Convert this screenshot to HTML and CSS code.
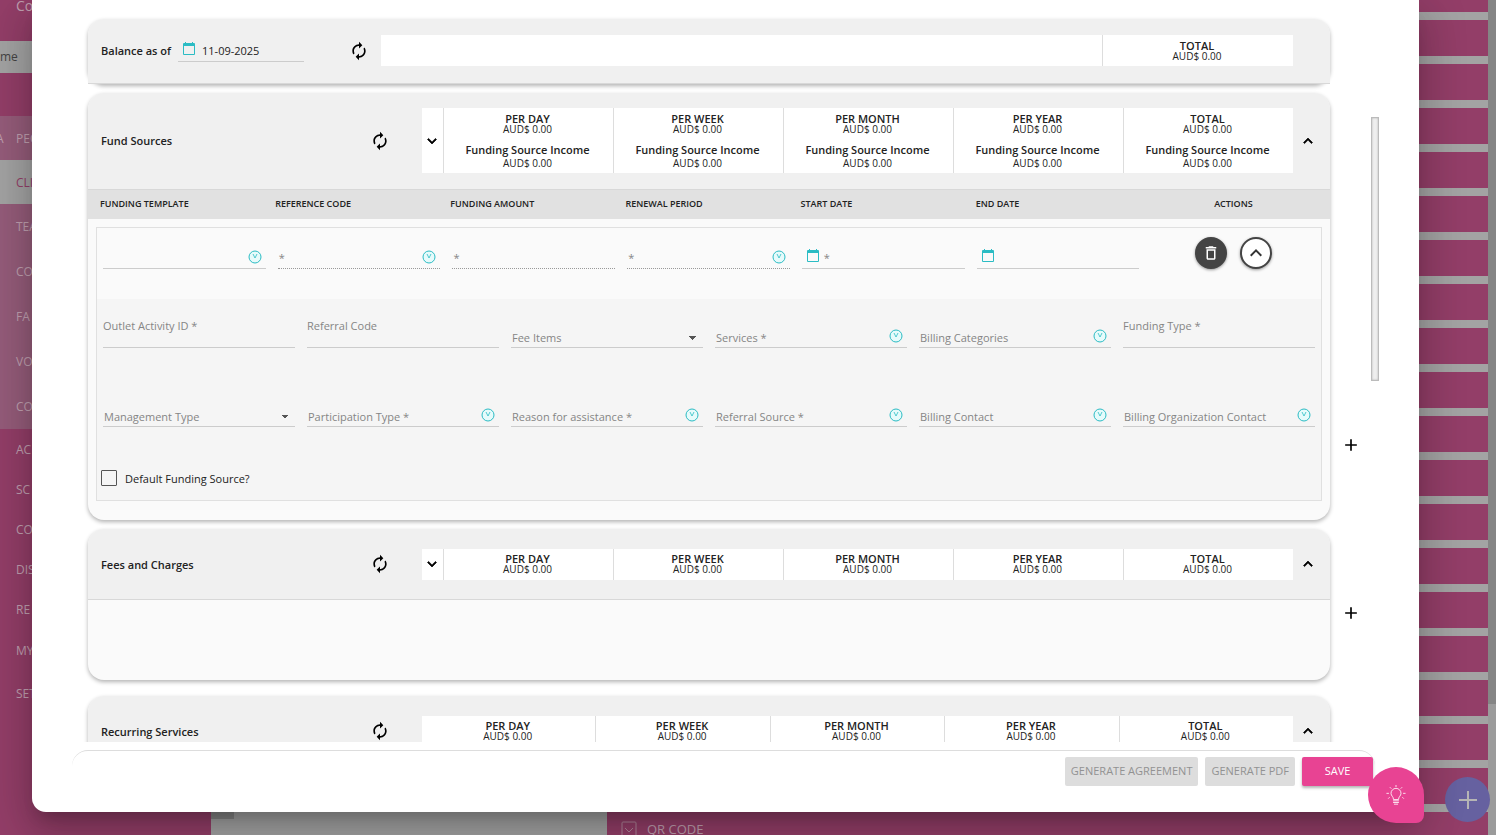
FILE: index.html
```html
<!DOCTYPE html>
<html lang="en">
  <head>
    <meta charset="UTF-8" />
    <meta name="viewport" content="width=device-width, initial-scale=1.0" />
    <title>Budget</title>
    <link rel="stylesheet" href="styles.css" />
  </head>
  <body>
    <svg class="sprite" aria-hidden="true">
      <symbol id="i-refresh" viewBox="0 0 24 24">
        <path d="M12 6v3l4-4-4-4v3c-4.42 0-8 3.58-8 8 0 1.57.46 3.03 1.24 4.26L6.7 14.8c-.45-.83-.7-1.79-.7-2.8 0-3.31 2.69-6 6-6zm6.76 1.74L17.3 9.2c.44.84.7 1.79.7 2.8 0 3.31-2.69 6-6 6v-3l-4 4 4 4v-3c4.42 0 8-3.58 8-8 0-1.57-.46-3.03-1.24-4.26z" />
      </symbol>
      <symbol id="i-up" viewBox="0 0 24 24">
        <path d="M12 8l-6 6 1.41 1.41L12 10.83l4.59 4.58L18 14z" />
      </symbol>
      <symbol id="i-down" viewBox="0 0 24 24">
        <path d="M16.59 8.59L12 13.17 7.41 8.59 6 10l6 6 6-6z" />
      </symbol>
      <symbol id="i-add" viewBox="0 0 24 24">
        <path d="M19 13h-6v6h-2v-6H5v-2h6V5h2v6h6v2z" />
      </symbol>
      <symbol id="i-trash" viewBox="0 0 24 24">
        <path d="M6 19c0 1.1.9 2 2 2h8c1.1 0 2-.9 2-2V7H6v12zM8 9h8v10H8V9zm7.5-5l-1-1h-5l-1 1H5v2h14V4z" />
      </symbol>
      <symbol id="i-calendar" viewBox="0 0 12 13">
        <path d="M2 0h1v1h6V0h1v1h1q1 0 1 1v10q0 1-1 1H1q-1 0-1-1V2q0-1 1-1h1zM1 4v8h10V4z" />
      </symbol>
      <symbol id="i-picker" viewBox="0 0 14 14">
        <circle cx="7" cy="7" r="6" fill="#e6fbfb" stroke="currentColor" />
        <path d="M5 4l2 4 2-4" fill="none" stroke="currentColor" stroke-width=".8" />
      </symbol>
    </svg>

    <div class="app">
      <nav class="sidebar">
        <div class="brand">Co</div>
        <div class="search">me</div>
        <ul class="menu group">
          <li class="head"><i>A</i><a href="#">PEO</a></li>
          <li class="active"><a href="#">CLI</a></li>
          <li><a href="#">TEA</a></li>
          <li><a href="#">CO</a></li>
          <li><a href="#">FA</a></li>
          <li><a href="#">VO</a></li>
          <li><a href="#">CO</a></li>
        </ul>
        <ul class="menu">
          <li><a href="#">AC</a></li>
          <li><a href="#">SC</a></li>
          <li><a href="#">CO</a></li>
          <li><a href="#">DIS</a></li>
          <li><a href="#">RE</a></li>
          <li class="tall"><a href="#">MY</a></li>
          <li class="tall"><i>:</i><a href="#">SET</a></li>
        </ul>
      </nav>
      <div class="page"></div>
      <div class="sections">
        <div class="bars"></div>
        <div class="section">
          <svg class="section-icon" viewBox="0 0 16 16"><rect x="1" y="1" width="14" height="14" rx="1" /><path d="M4 7l4 4 4-4" /></svg>
          QR CODE
        </div>
      </div>
      <div class="page-scroll"><div class="page-thumb"></div></div>
    </div>
    <button class="collapse" aria-label="Collapse menu"></button>
    <button class="fab-add" aria-label="Add"><svg viewBox="0 0 20 20"><path d="M10 1v18M1 10h18" /></svg></button>

    <div class="dialog" role="dialog" aria-label="Budget">
      <div class="dialog-body">
        <div class="panels">
          <div class="panel-row">
            <section class="card">
              <header class="card-head balance-head">
                <label class="title" for="balance-date">Balance as of</label>
                <div class="field date-field">
                  <svg class="calendar"><use href="#i-calendar" /></svg>
                  <input id="balance-date" type="text" value="11-09-2025" />
                </div>
                <button class="icon-btn refresh" aria-label="Refresh balance"><svg><use href="#i-refresh" /></svg></button>
                <div class="summary">
                  <div class="cell blank"></div>
                  <div class="cell"><b>TOTAL</b><span>AUD$ 0.00</span></div>
                </div>
              </header>
            </section>
            <div class="side"></div>
          </div>

          <div class="panel-row">
            <section class="card">
              <header class="card-head fund-head">
                <h2 class="title">Fund Sources</h2>
                <button class="icon-btn refresh" aria-label="Refresh fund sources"><svg><use href="#i-refresh" /></svg></button>
                <div class="summary">
                  <button class="toggle" aria-label="Show breakdown"><svg><use href="#i-down" /></svg></button>
                  <div class="cell"><b>PER DAY</b><span>AUD$ 0.00</span><b class="income">Funding Source Income</b><span>AUD$ 0.00</span></div>
                  <div class="cell"><b>PER WEEK</b><span>AUD$ 0.00</span><b class="income">Funding Source Income</b><span>AUD$ 0.00</span></div>
                  <div class="cell"><b>PER MONTH</b><span>AUD$ 0.00</span><b class="income">Funding Source Income</b><span>AUD$ 0.00</span></div>
                  <div class="cell"><b>PER YEAR</b><span>AUD$ 0.00</span><b class="income">Funding Source Income</b><span>AUD$ 0.00</span></div>
                  <div class="cell"><b>TOTAL</b><span>AUD$ 0.00</span><b class="income">Funding Source Income</b><span>AUD$ 0.00</span></div>
                </div>
                <button class="icon-btn" aria-label="Collapse fund sources"><svg><use href="#i-up" /></svg></button>
              </header>
              <table class="funds">
                <thead>
                  <tr>
                    <th>FUNDING TEMPLATE</th>
                    <th>REFERENCE CODE</th>
                    <th>FUNDING AMOUNT</th>
                    <th>RENEWAL PERIOD</th>
                    <th>START DATE</th>
                    <th>END DATE</th>
                    <th class="actions">ACTIONS</th>
                  </tr>
                </thead>
                <tbody>
                  <tr class="fund-row">
                    <td>
                      <div class="field"><input type="text" aria-label="Funding template" /><svg class="picker"><use href="#i-picker" /></svg></div>
                    </td>
                    <td>
                      <div class="field dotted"><label for="reference">*</label><input id="reference" type="text" disabled /><svg class="picker"><use href="#i-picker" /></svg></div>
                    </td>
                    <td>
                      <div class="field dotted"><label for="amount">*</label><input id="amount" type="text" disabled /></div>
                    </td>
                    <td>
                      <div class="field dotted"><label for="renewal">*</label><input id="renewal" type="text" disabled /><svg class="picker"><use href="#i-picker" /></svg></div>
                    </td>
                    <td>
                      <div class="field date-field"><svg class="calendar"><use href="#i-calendar" /></svg><label for="start">*</label><input id="start" type="text" /></div>
                    </td>
                    <td>
                      <div class="field date-field"><svg class="calendar"><use href="#i-calendar" /></svg><input type="text" aria-label="End date" /></div>
                    </td>
                    <td class="actions">
                      <button class="round dark" aria-label="Delete"><svg><use href="#i-trash" /></svg></button>
                      <button class="round" aria-label="Collapse row"><svg><use href="#i-up" /></svg></button>
                    </td>
                  </tr>
                  <tr class="detail-row">
                    <td colspan="7">
                      <div class="details">
                        <div class="field raised"><label for="outlet">Outlet Activity ID *</label><input id="outlet" type="text" /></div>
                        <div class="field raised"><label for="referral-code">Referral Code</label><input id="referral-code" type="text" /></div>
                        <div class="field"><label for="fee">Fee Items</label><select id="fee"><option></option></select></div>
                        <div class="field"><label for="services">Services *</label><input id="services" type="text" /><svg class="picker"><use href="#i-picker" /></svg></div>
                        <div class="field"><label for="categories">Billing Categories</label><input id="categories" type="text" /><svg class="picker"><use href="#i-picker" /></svg></div>
                        <div class="field raised"><label for="funding-type">Funding Type *</label><input id="funding-type" type="text" /></div>
                        <div class="field"><label for="management">Management Type</label><select id="management"><option></option></select></div>
                        <div class="field"><label for="participation">Participation Type *</label><input id="participation" type="text" /><svg class="picker"><use href="#i-picker" /></svg></div>
                        <div class="field"><label for="reason">Reason for assistance *</label><input id="reason" type="text" /><svg class="picker"><use href="#i-picker" /></svg></div>
                        <div class="field"><label for="source">Referral Source *</label><input id="source" type="text" /><svg class="picker"><use href="#i-picker" /></svg></div>
                        <div class="field"><label for="contact">Billing Contact</label><input id="contact" type="text" /><svg class="picker"><use href="#i-picker" /></svg></div>
                        <div class="field"><label for="organization">Billing Organization Contact</label><input id="organization" type="text" /><svg class="picker"><use href="#i-picker" /></svg></div>
                      </div>
                      <label class="check"><input type="checkbox" />Default Funding Source?</label>
                    </td>
                  </tr>
                </tbody>
              </table>
            </section>
            <div class="side"><button class="icon-btn add" aria-label="Add fund source"><svg><use href="#i-add" /></svg></button></div>
          </div>

          <div class="panel-row fees-row">
            <section class="card">
              <header class="card-head">
                <h2 class="title">Fees and Charges</h2>
                <button class="icon-btn refresh" aria-label="Refresh fees"><svg><use href="#i-refresh" /></svg></button>
                <div class="summary">
                  <button class="toggle" aria-label="Show breakdown"><svg><use href="#i-down" /></svg></button>
                  <div class="cell"><b>PER DAY</b><span>AUD$ 0.00</span></div>
                  <div class="cell"><b>PER WEEK</b><span>AUD$ 0.00</span></div>
                  <div class="cell"><b>PER MONTH</b><span>AUD$ 0.00</span></div>
                  <div class="cell"><b>PER YEAR</b><span>AUD$ 0.00</span></div>
                  <div class="cell"><b>TOTAL</b><span>AUD$ 0.00</span></div>
                </div>
                <button class="icon-btn" aria-label="Collapse fees"><svg><use href="#i-up" /></svg></button>
              </header>
              <div class="empty"></div>
            </section>
            <div class="side"><button class="icon-btn add" aria-label="Add fee"><svg><use href="#i-add" /></svg></button></div>
          </div>

          <div class="panel-row">
            <section class="card">
              <header class="card-head">
                <h2 class="title">Recurring Services</h2>
                <button class="icon-btn refresh" aria-label="Refresh services"><svg><use href="#i-refresh" /></svg></button>
                <div class="summary">
                  <div class="cell"><b>PER DAY</b><span>AUD$ 0.00</span></div>
                  <div class="cell"><b>PER WEEK</b><span>AUD$ 0.00</span></div>
                  <div class="cell"><b>PER MONTH</b><span>AUD$ 0.00</span></div>
                  <div class="cell"><b>PER YEAR</b><span>AUD$ 0.00</span></div>
                  <div class="cell"><b>TOTAL</b><span>AUD$ 0.00</span></div>
                </div>
                <button class="icon-btn" aria-label="Collapse services"><svg><use href="#i-up" /></svg></button>
              </header>
            </section>
            <div class="side"></div>
          </div>
        </div>
        <div class="scroll-thumb"></div>
      </div>
      <footer class="dialog-foot">
        <button class="btn" disabled>GENERATE AGREEMENT</button>
        <button class="btn" disabled>GENERATE PDF</button>
        <button class="btn save">SAVE</button>
      </footer>
    </div>

    <button class="fab-tip" aria-label="Tips">
      <svg viewBox="0 0 24 24"><path d="M9 17c0-3-3-4-3-7a6 6 0 0 1 12 0c0 3-3 4-3 7zM9 19h6M9 21h6M10 23h4M12 2V0M6 4L5 3M18 4l1-1M3 10H1M23 10h-2M4 15l-1 1M20 15l1 1" /></svg>
    </button>
  </body>
</html>
```

FILE: styles.css
```css
* {
  box-sizing: border-box;
}
body {
  margin: 0;
  height: 100vh;
  overflow: hidden;
  position: relative;
  font-family: "Open Sans", sans-serif;
  font-size: 11px;
  color: #222;
}
button,
input,
select {
  font: inherit;
  color: inherit;
  margin: 0;
  padding: 0;
  border: none;
  background: none;
}
.sprite {
  display: none;
}

/* page behind the dialog */
.app {
  display: flex;
  height: 100%;
  background: #a3a3a3;
}
.sidebar {
  width: 211px;
  background: #933e68;
  color: #c0a0b0;
  font-size: 12px;
}
.brand {
  height: 41px;
  padding-left: 16px;
  line-height: 12px;
  font-size: 14px;
}
.search {
  height: 32px;
  margin-bottom: 43px;
  line-height: 32px;
  background: #a3a3a3;
  color: #444;
}
.menu {
  list-style: none;
  margin: 0;
  padding: 0;
}
.menu li {
  display: flex;
  align-items: center;
  height: 40px;
}
.menu .tall {
  height: 43px;
}
.menu i {
  width: 0;
  font-style: normal;
  text-indent: -4px;
}
.menu a {
  padding-left: 16px;
  color: inherit;
  text-decoration: none;
}
.menu.group li {
  height: 45px;
  background: #955c7a;
}
.menu.group .head,
.menu.group .active {
  height: 44px;
}
.menu.group .active {
  background: #a3a3a3;
  color: #933e68;
}
.page {
  width: 396px;
}
.sections {
  flex: 1;
  display: flex;
  flex-direction: column;
}
.bars {
  flex: none;
  height: 812px;
  background: repeating-linear-gradient(#a3a3a3 0 8px, #933e68 8px 44px) 0 12px no-repeat, #933e68;
}
.section {
  flex: none;
  display: flex;
  align-items: center;
  gap: 10px;
  height: 36px;
  padding: 0 0 2px 14px;
  background: #933e68;
  color: #c0a0b0;
  font-size: 13px;
}
.section-icon {
  width: 16px;
  height: 16px;
  fill: none;
  stroke: #b0859a;
}
.page-scroll {
  width: 8px;
  background: #9b9b9b;
}
.page-thumb {
  height: 704px;
  background: #858585;
}
.collapse {
  position: absolute;
  left: 211px;
  bottom: 16px;
  width: 23px;
  height: 22px;
  background: #858585;
}
.fab-add {
  position: absolute;
  right: 6px;
  bottom: 13px;
  width: 45px;
  height: 45px;
  border-radius: 50%;
  background: #6661a0;
}
.fab-add svg {
  width: 20px;
  height: 20px;
  display: block;
  margin: auto;
  stroke: #b5b5b5;
  stroke-width: 2;
}

/* dialog */
.dialog {
  position: absolute;
  top: 0;
  left: 32px;
  right: 77px;
  bottom: 23px;
  display: flex;
  flex-direction: column;
  background: #fff;
  border-radius: 0 0 14px 14px;
  box-shadow: 0 11px 15px -7px rgba(0, 0, 0, 0.2), 0 24px 38px 3px rgba(0, 0, 0, 0.14), 0 9px 46px 8px rgba(0, 0, 0, 0.12);
}
.dialog-body {
  flex: 1;
  min-height: 0;
  display: flex;
  overflow: hidden;
  padding: 19px 40px 0 56px;
}
.panels {
  flex: 1;
}
.panel-row {
  display: flex;
  margin-bottom: 9px;
}
.fees-row {
  margin-bottom: 16px;
}
.side {
  width: 41px;
  display: flex;
  align-items: flex-end;
  justify-content: center;
  padding-bottom: 65px;
}
.fees-row .side {
  padding-bottom: 57px;
}
.scroll-thumb {
  width: 8px;
  height: 264px;
  margin-top: 98px;
  background: #eee;
  border: 1px solid #bbb;
  box-shadow: inset 0 0 2px #aaa;
}
.card {
  flex: 1;
  background: #fafafa;
  border-radius: 16px;
  box-shadow: 0 2px 4px rgba(0, 0, 0, 0.3);
}
.card-head {
  display: flex;
  align-items: center;
  height: 71px;
  padding: 0 12px 0 13px;
  background: #f0f0f0;
  border-bottom: 1px solid #d8d8d8;
  border-radius: 16px 16px 0 0;
}
.balance-head {
  height: 65px;
  padding: 0 37px 1px 13px;
}
.fund-head {
  height: 97px;
  padding-bottom: 1px;
}
.title {
  margin: 0;
  font-size: 11px;
  font-weight: 600;
}
h2.title {
  width: 269px;
}
.icon-btn {
  display: flex;
  width: 20px;
  height: 20px;
  align-items: center;
  justify-content: center;
}
.icon-btn svg,
.toggle svg {
  flex: none;
  width: 18px;
  height: 18px;
  stroke: #111;
}
.icon-btn.refresh svg,
.icon-btn.add svg {
  width: 20px;
  height: 20px;
  stroke: none;
}
.refresh {
  margin-right: 32px;
}
.balance-head .refresh {
  margin: 0 12px 0 45px;
}
.balance-head .field {
  width: 126px;
  height: 22px;
  margin-left: 7px;
}
.summary {
  flex: 1;
  display: flex;
  background: #fff;
  margin-right: 5px;
}
.balance-head .summary {
  margin-right: 0;
}
.toggle {
  width: 21px;
  padding-right: 2px;
  display: flex;
  align-items: center;
  justify-content: center;
}
.cell {
  flex: 1;
  display: flex;
  flex-direction: column;
  align-items: center;
  justify-content: center;
  min-height: 31px;
  padding-right: 2px;
  border-left: 1px solid #ddd;
  line-height: 11px;
}
.cell:first-child {
  border-left: none;
}
.cell b {
  font-weight: 600;
}
.cell span {
  font-size: 10px;
}
.cell .income {
  margin: 8px 0 2px;
  line-height: 13px;
}
.fund-head .cell {
  height: 65px;
}
.balance-head .cell {
  flex: 0 0 191px;
}
.balance-head .blank {
  flex: 1;
}

/* fund table */
.funds,
.funds thead,
.funds tbody,
.detail-row,
.detail-row td {
  display: block;
}
.funds td,
.funds th {
  padding: 0;
  text-align: left;
}
.funds thead tr,
.fund-row {
  display: grid;
  grid-template-columns: repeat(6, 175fr) 165fr;
}
.funds thead tr {
  height: 29px;
  padding: 0 14px 2px 12px;
  align-items: center;
  background: #e1e1e1;
  font-size: 9px;
}
.funds th {
  font-weight: 600;
}
.funds th.actions {
  text-align: center;
}
.funds tbody {
  margin: 8px 8px 0;
  border: 1px solid #e0e0e0;
}
.funds {
  padding-bottom: 19px;
}
.fund-row {
  height: 71px;
  padding: 9px 5px 0 6px;
}
.fund-row td {
  padding-right: 12px;
}
.fund-row .actions {
  display: flex;
  gap: 13px;
  justify-content: center;
  padding: 0;
}
.round {
  display: flex;
  align-items: center;
  justify-content: center;
  width: 32px;
  height: 32px;
  border: 2px solid #444;
  border-radius: 50%;
  background: #fff;
  box-shadow: 0 1px 3px rgba(0, 0, 0, 0.4);
}
.round svg {
  width: 24px;
  height: 24px;
  fill: #333;
}
.dark {
  background: #444;
}
.dark svg {
  width: 18px;
  height: 18px;
  fill: #fff;
}
.detail-row {
  background: #f5f5f5;
  padding: 17px 6px 14px;
}
.details {
  display: grid;
  grid-template-columns: repeat(6, 1fr);
  gap: 47px 12px;
}

/* label and control share one grid area */
.field {
  display: grid;
  grid-template-columns: minmax(0, 1fr);
  height: 32px;
  border-bottom: 1px solid #ccc;
  color: #858585;
}
.field > * {
  grid-area: 1 / 1;
}
.field label {
  align-self: end;
  padding-left: 1px;
  line-height: 18px;
  pointer-events: none;
}
.field input,
.field select {
  width: 100%;
  min-width: 0;
}
.field select {
  appearance: none;
  background: linear-gradient(to bottom right, #555 50%, transparent 50%) right 6px bottom 7px / 4px 4px no-repeat,
    linear-gradient(to bottom left, #555 50%, transparent 50%) right 10px bottom 7px / 4px 4px no-repeat;
}
.field.raised label {
  align-self: start;
  padding-left: 0;
  line-height: 20px;
}
.field.dotted {
  border-bottom: 1px dotted #999;
}
.fund-row .field label {
  line-height: 20px;
}
.picker {
  align-self: end;
  justify-self: end;
  width: 14px;
  height: 14px;
  margin: 0 4px 4px 0;
  color: #2bbcc4;
}
.calendar {
  align-self: end;
  width: 12px;
  height: 13px;
  margin: 0 0 6px 5px;
  fill: #2bbcc4;
}
.field.date-field label {
  padding-left: 22px;
}
.date-field input {
  padding-left: 24px;
  color: #222;
}
.check {
  display: flex;
  align-items: center;
  gap: 8px;
  margin: 43px 0 0 -2px;
}
.check input {
  appearance: none;
  width: 16px;
  height: 16px;
  border: 1px solid #555;
  border-radius: 1px;
}
.empty {
  height: 80px;
}

.dialog-foot {
  display: flex;
  justify-content: flex-end;
  gap: 7px;
  height: 62px;
  margin: 8px 44px 0 40px;
  padding: 6px 2px 0;
  border-top: 1px solid #ddd;
  border-radius: 16px 16px 0 0;
}
.btn {
  height: 29px;
  padding: 0 6px 2px;
  background: #ddd;
  color: #929292;
  border-radius: 2px;
}
.save {
  width: 71px;
  background: #e84393;
  color: #fff;
  box-shadow: 0 2px 3px rgba(0, 0, 0, 0.3);
}
.fab-tip {
  position: absolute;
  right: 72px;
  bottom: 12px;
  width: 56px;
  height: 56px;
  border-radius: 50% 50% 8px 50%;
  background: #e84393;
}
.fab-tip svg {
  display: block;
  width: 20px;
  height: 20px;
  margin: auto;
  fill: none;
  stroke: #fff;
  stroke-linecap: round;
}
```
